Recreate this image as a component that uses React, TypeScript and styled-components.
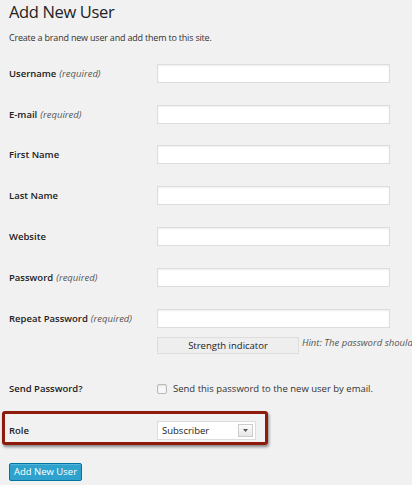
import React from "react";
import styled, { createGlobalStyle } from "styled-components";

const Global = createGlobalStyle`
  html, body { margin: 0; padding: 0; background: #f1f1f1; overflow: hidden; }
  body { font-family: "Open Sans", "Noto Sans", sans-serif; color: #222; }
  * { box-sizing: border-box; }
`;

const Page = styled.div`
  width: 412px;
  height: 485px;
  padding: 0 0 0 9px;
  display: flex;
  flex-direction: column;
  overflow: hidden;
`;

const Header = styled.div`
  height: 53px;
  display: flex;
  flex-direction: column;
`;

const Title = styled.h1`
  margin: 0;
  padding-top: 1px;
  font-size: 16.5px;
  line-height: 22px;
  font-weight: 400;
  letter-spacing: -0.35px;
  color: #222;
`;

const Desc = styled.p`
  margin: 8px 0 0;
  font-size: 9px;
  line-height: 13px;
  letter-spacing: -0.2px;
  color: #333;
`;

const Row = styled.div<{ $h: number }>`
  display: grid;
  grid-template-columns: 148px 233px;
  align-items: center;
  height: ${(p) => p.$h}px;
`;

const Label = styled.span`
  font-size: 9.5px;
  font-weight: 600;
  color: #222;
  white-space: nowrap;
`;

const Req = styled.em`
  font-weight: 400;
  font-style: italic;
  color: #555;
  margin-left: 3px;
`;

const Input = styled.div`
  height: 19px;
  width: 233px;
  background: #fff;
  border: 1px solid #ddd;
  box-shadow: inset 0 1px 2px rgba(0, 0, 0, 0.07);
`;

const PassBlock = styled.div`
  display: grid;
  grid-template-columns: 148px auto;
  grid-template-rows: 19px 17px;
  row-gap: 9px;
  align-items: center;
  padding-top: 11px;
`;

const StrengthWrap = styled.div`
  grid-column: 2;
  display: flex;
  align-items: center;
  gap: 3px;
  white-space: nowrap;
`;

const Strength = styled.div`
  width: 142px;
  height: 17px;
  background: #eee;
  border: 1px solid #ddd;
  font-size: 9.5px;
  color: #222;
  display: flex;
  align-items: center;
  justify-content: center;
`;

const Hint = styled.span`
  font-size: 9.5px;
  font-style: italic;
  color: #555;
  margin-top: -6px;
`;

const SendRow = styled(Row)`
  margin-top: 17px;
`;

const CheckLine = styled.div`
  display: flex;
  align-items: center;
  gap: 6px;
  font-size: 9.5px;
  color: #333;
  white-space: nowrap;
`;

const Checkbox = styled.span`
  width: 10px;
  height: 10px;
  border: 1px solid #bbb;
  border-radius: 2px;
  background: #f8f8f8;
  box-shadow: inset 0 1px 2px rgba(0, 0, 0, 0.1);
`;

const Highlight = styled.div`
  margin: 4px 0 0 -7px;
  width: 266px;
  height: 34px;
  border: 3px solid #8c1b0c;
  border-radius: 3px;
  box-shadow: 1px 2px 3px rgba(0, 0, 0, 0.45);
  padding: 5px 0 0 4px;
  display: grid;
  grid-template-columns: 148px auto;
  align-items: center;
`;

const Select = styled.div`
  width: 99px;
  height: 19px;
  background: #fff;
  border: 1px solid #ddd;
  display: flex;
  align-items: center;
  justify-content: space-between;
  padding: 0 2px 0 4px;
  font-size: 9.5px;
  color: #222;
`;

const Arrow = styled.span`
  width: 15px;
  height: 13px;
  border: 1px solid #ccc;
  background: linear-gradient(#fdfdfd, #e6e6e6);
  display: flex;
  align-items: center;
  justify-content: center;
`;

const Button = styled.button`
  margin-top: 18px;
  width: 73px;
  height: 18px;
  padding: 0;
  background: #2ea2cc;
  border: 1px solid #0074a2;
  border-radius: 2px;
  box-shadow: inset 0 1px 0 rgba(120, 200, 230, 0.5);
  color: #fff;
  font-family: inherit;
  font-size: 9.5px;
  line-height: 16px;
`;

const fields: { label: string; req?: boolean }[] = [
  { label: "Username", req: true },
  { label: "E-mail", req: true },
  { label: "First Name" },
  { label: "Last Name" },
  { label: "Website" },
  { label: "Password", req: true },
];

export default function App() {
  return (
    <>
      <Global />
      <Page>
        <Header>
          <Title>Add New User</Title>
          <Desc>Create a brand new user and add them to this site.</Desc>
        </Header>
        {fields.map((f) => (
          <Row key={f.label} $h={40.75}>
            <Label>
              {f.label}
              {f.req && <Req>(required)</Req>}
            </Label>
            <Input />
          </Row>
        ))}
        <PassBlock>
          <Label>
            Repeat Password<Req>(required)</Req>
          </Label>
          <Input />
          <StrengthWrap>
            <Strength>Strength indicator</Strength>
            <Hint>Hint: The password should</Hint>
          </StrengthWrap>
        </PassBlock>
        <SendRow $h={36}>
          <Label>Send Password?</Label>
          <CheckLine>
            <Checkbox />
            Send this password to the new user by email.
          </CheckLine>
        </SendRow>
        <Highlight>
          <Label>Role</Label>
          <Select>
            Subscriber
            <Arrow>
              <svg width="5" height="3" viewBox="0 0 5 3">
                <path d="M0 0h5L2.5 3z" fill="#555" />
              </svg>
            </Arrow>
          </Select>
        </Highlight>
        <Button>Add New User</Button>
      </Page>
    </>
  );
}
